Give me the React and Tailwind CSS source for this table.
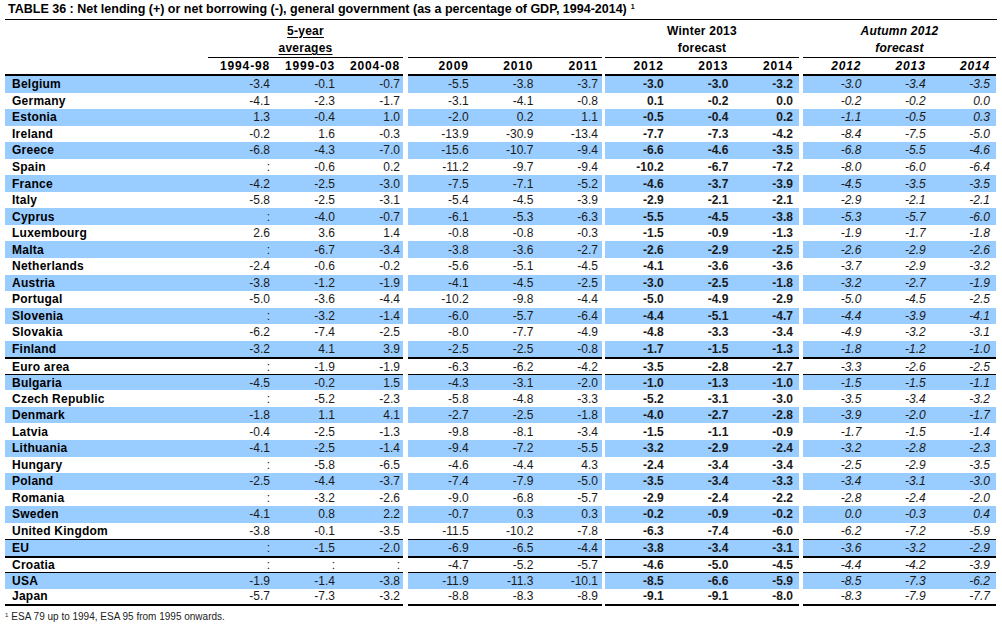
import React from "react";

const rows = [
  ["Belgium", "-3.4", "-0.1", "-0.7", "-5.5", "-3.8", "-3.7", "-3.0", "-3.0", "-3.2", "-3.0", "-3.4", "-3.5"],
  ["Germany", "-4.1", "-2.3", "-1.7", "-3.1", "-4.1", "-0.8", "0.1", "-0.2", "0.0", "-0.2", "-0.2", "0.0"],
  ["Estonia", "1.3", "-0.4", "1.0", "-2.0", "0.2", "1.1", "-0.5", "-0.4", "0.2", "-1.1", "-0.5", "0.3"],
  ["Ireland", "-0.2", "1.6", "-0.3", "-13.9", "-30.9", "-13.4", "-7.7", "-7.3", "-4.2", "-8.4", "-7.5", "-5.0"],
  ["Greece", "-6.8", "-4.3", "-7.0", "-15.6", "-10.7", "-9.4", "-6.6", "-4.6", "-3.5", "-6.8", "-5.5", "-4.6"],
  ["Spain", ":", "-0.6", "0.2", "-11.2", "-9.7", "-9.4", "-10.2", "-6.7", "-7.2", "-8.0", "-6.0", "-6.4"],
  ["France", "-4.2", "-2.5", "-3.0", "-7.5", "-7.1", "-5.2", "-4.6", "-3.7", "-3.9", "-4.5", "-3.5", "-3.5"],
  ["Italy", "-5.8", "-2.5", "-3.1", "-5.4", "-4.5", "-3.9", "-2.9", "-2.1", "-2.1", "-2.9", "-2.1", "-2.1"],
  ["Cyprus", ":", "-4.0", "-0.7", "-6.1", "-5.3", "-6.3", "-5.5", "-4.5", "-3.8", "-5.3", "-5.7", "-6.0"],
  ["Luxembourg", "2.6", "3.6", "1.4", "-0.8", "-0.8", "-0.3", "-1.5", "-0.9", "-1.3", "-1.9", "-1.7", "-1.8"],
  ["Malta", ":", "-6.7", "-3.4", "-3.8", "-3.6", "-2.7", "-2.6", "-2.9", "-2.5", "-2.6", "-2.9", "-2.6"],
  ["Netherlands", "-2.4", "-0.6", "-0.2", "-5.6", "-5.1", "-4.5", "-4.1", "-3.6", "-3.6", "-3.7", "-2.9", "-3.2"],
  ["Austria", "-3.8", "-1.2", "-1.9", "-4.1", "-4.5", "-2.5", "-3.0", "-2.5", "-1.8", "-3.2", "-2.7", "-1.9"],
  ["Portugal", "-5.0", "-3.6", "-4.4", "-10.2", "-9.8", "-4.4", "-5.0", "-4.9", "-2.9", "-5.0", "-4.5", "-2.5"],
  ["Slovenia", ":", "-3.2", "-1.4", "-6.0", "-5.7", "-6.4", "-4.4", "-5.1", "-4.7", "-4.4", "-3.9", "-4.1"],
  ["Slovakia", "-6.2", "-7.4", "-2.5", "-8.0", "-7.7", "-4.9", "-4.8", "-3.3", "-3.4", "-4.9", "-3.2", "-3.1"],
  ["Finland", "-3.2", "4.1", "3.9", "-2.5", "-2.5", "-0.8", "-1.7", "-1.5", "-1.3", "-1.8", "-1.2", "-1.0"],
  ["Euro area", ":", "-1.9", "-1.9", "-6.3", "-6.2", "-4.2", "-3.5", "-2.8", "-2.7", "-3.3", "-2.6", "-2.5"],
  ["Bulgaria", "-4.5", "-0.2", "1.5", "-4.3", "-3.1", "-2.0", "-1.0", "-1.3", "-1.0", "-1.5", "-1.5", "-1.1"],
  ["Czech Republic", ":", "-5.2", "-2.3", "-5.8", "-4.8", "-3.3", "-5.2", "-3.1", "-3.0", "-3.5", "-3.4", "-3.2"],
  ["Denmark", "-1.8", "1.1", "4.1", "-2.7", "-2.5", "-1.8", "-4.0", "-2.7", "-2.8", "-3.9", "-2.0", "-1.7"],
  ["Latvia", "-0.4", "-2.5", "-1.3", "-9.8", "-8.1", "-3.4", "-1.5", "-1.1", "-0.9", "-1.7", "-1.5", "-1.4"],
  ["Lithuania", "-4.1", "-2.5", "-1.4", "-9.4", "-7.2", "-5.5", "-3.2", "-2.9", "-2.4", "-3.2", "-2.8", "-2.3"],
  ["Hungary", ":", "-5.8", "-6.5", "-4.6", "-4.4", "4.3", "-2.4", "-3.4", "-3.4", "-2.5", "-2.9", "-3.5"],
  ["Poland", "-2.5", "-4.4", "-3.7", "-7.4", "-7.9", "-5.0", "-3.5", "-3.4", "-3.3", "-3.4", "-3.1", "-3.0"],
  ["Romania", ":", "-3.2", "-2.6", "-9.0", "-6.8", "-5.7", "-2.9", "-2.4", "-2.2", "-2.8", "-2.4", "-2.0"],
  ["Sweden", "-4.1", "0.8", "2.2", "-0.7", "0.3", "0.3", "-0.2", "-0.9", "-0.2", "0.0", "-0.3", "0.4"],
  ["United Kingdom", "-3.8", "-0.1", "-3.5", "-11.5", "-10.2", "-7.8", "-6.3", "-7.4", "-6.0", "-6.2", "-7.2", "-5.9"],
  ["EU", ":", "-1.5", "-2.0", "-6.9", "-6.5", "-4.4", "-3.8", "-3.4", "-3.1", "-3.6", "-3.2", "-2.9"],
  ["Croatia", ":", ":", ":", "-4.7", "-5.2", "-5.7", "-4.6", "-5.0", "-4.5", "-4.4", "-4.2", "-3.9"],
  ["USA", "-1.9", "-1.4", "-3.8", "-11.9", "-11.3", "-10.1", "-8.5", "-6.6", "-5.9", "-8.5", "-7.3", "-6.2"],
  ["Japan", "-5.7", "-7.3", "-3.2", "-8.8", "-8.3", "-8.9", "-9.1", "-9.1", "-8.0", "-8.3", "-7.9", "-7.7"],
];

// border-top class per row name
const topBorder = {
  "Euro area": "border-t-2",
  Bulgaria: "border-t",
  EU: "border-t",
  Croatia: "border-t-2",
  USA: "border-t",
};

function Cell({ v, cls }) {
  return <div className={"flex-1 text-right " + cls}>{v}</div>;
}

function DataRow({ r, i }) {
  const bg = i % 2 === 0 ? "bg-[#99ccff]" : "";
  const bt = topBorder[r[0]] || "";
  const last = i === rows.length - 1 ? "border-b-2" : "";
  const blk = `flex items-center h-full border-black ${bg} ${bt} ${last}`;
  return (
    <div className="flex h-[16.55px]">
      <div className={`${blk} w-[398px]`}>
        <div className="w-[203px] pl-[7px] font-bold text-[12px] tracking-[0.02em] text-black">{r[0]}</div>
        <Cell v={r[1]} cls="pr-[3px]" />
        <Cell v={r[2]} cls="pr-[3px]" />
        <Cell v={r[3]} cls="pr-[3px]" />
      </div>
      <div className={`${blk} w-[194px] ml-[5px]`}>
        <Cell v={r[4]} cls="pr-[4px]" />
        <Cell v={r[5]} cls="pr-[4px]" />
        <Cell v={r[6]} cls="pr-[4px]" />
      </div>
      <div className={`${blk} w-[194px] ml-[3px]`}>
        <Cell v={r[7]} cls="pr-[6px] font-bold" />
        <Cell v={r[8]} cls="pr-[6px] font-bold" />
        <Cell v={r[9]} cls="pr-[6px] font-bold" />
      </div>
      <div className={`${blk} w-[193px] ml-[4px]`}>
        <Cell v={r[10]} cls="pr-[6px] italic" />
        <Cell v={r[11]} cls="pr-[6px] italic" />
        <Cell v={r[12]} cls="pr-[6px] italic" />
      </div>
    </div>
  );
}

export default function App() {
  return (
    <div
      className="w-[1002px] h-[624px] bg-white text-[#111] text-[12px] leading-none overflow-hidden pl-[5px]"
      style={{ fontFamily: '"Liberation Sans", Arial, sans-serif' }}
    >
      {/* Title */}
      <div className="w-[992px] h-[20px] border-b border-black flex items-center pl-[3px] font-bold text-[12.5px] text-black">
        <span>
          TABLE 36 : Net lending (+) or net borrowing (-), general government (as a percentage of GDP, 1994-2014)
          <span className="text-[7px] align-top ml-[4px]">1</span>
        </span>
      </div>

      {/* Header line 1 */}
      <div className="flex h-[19px] pt-[2px] items-center font-bold text-black text-[12px] tracking-[0.02em]">
        <div className="w-[203px]" />
        <div className="w-[195px] text-center">
          <span className="underline underline-offset-2">5-year</span>
        </div>
        <div className="w-[194px] ml-[5px]" />
        <div className="w-[194px] ml-[3px] text-center">Winter 2013</div>
        <div className="w-[193px] ml-[4px] text-center italic">Autumn 2012</div>
      </div>
      {/* Header line 2 */}
      <div className="flex h-[18px] items-center font-bold text-black text-[12px] tracking-[0.02em]">
        <div className="w-[203px]" />
        <div className="w-[195px] text-center">
          <span className="underline underline-offset-2">averages</span>
        </div>
        <div className="w-[194px] ml-[5px]" />
        <div className="w-[194px] ml-[3px] text-center">forecast</div>
        <div className="w-[193px] ml-[4px] text-center italic">forecast</div>
      </div>
      {/* Header years */}
      <div className="flex h-[19px] font-bold text-black text-[12px] tracking-[0.07em]">
        <div className="flex w-[398px] border-b-2 border-black">
          <div className="w-[203px]" />
          <div className="flex flex-1 items-center border-t border-black">
            <Cell v="1994-98" cls="pr-[3px]" />
            <Cell v="1999-03" cls="pr-[3px]" />
            <Cell v="2004-08" cls="pr-[3px]" />
          </div>
        </div>
        <div className="flex items-center w-[194px] ml-[5px] border-t border-b-2 border-black">
          <Cell v="2009" cls="pr-[4px]" />
          <Cell v="2010" cls="pr-[4px]" />
          <Cell v="2011" cls="pr-[4px]" />
        </div>
        <div className="flex items-center w-[194px] ml-[3px] border-t border-b-2 border-black">
          <Cell v="2012" cls="pr-[6px]" />
          <Cell v="2013" cls="pr-[6px]" />
          <Cell v="2014" cls="pr-[6px]" />
        </div>
        <div className="flex items-center w-[193px] ml-[4px] border-t border-b-2 border-black italic">
          <Cell v="2012" cls="pr-[6px]" />
          <Cell v="2013" cls="pr-[6px]" />
          <Cell v="2014" cls="pr-[6px]" />
        </div>
      </div>

      {/* Data rows */}
      <div className="text-[12px] text-[#1a1a1a]">
        {rows.map((r, i) => (
          <DataRow key={r[0]} r={r} i={i} />
        ))}
      </div>

      {/* Footnote */}
      <div className="pt-[6px] text-[10px] text-[#222]">
        <span className="text-[6px] align-top mr-[3px]">1</span>
        ESA 79 up to 1994, ESA 95 from 1995 onwards.
      </div>
    </div>
  );
}
